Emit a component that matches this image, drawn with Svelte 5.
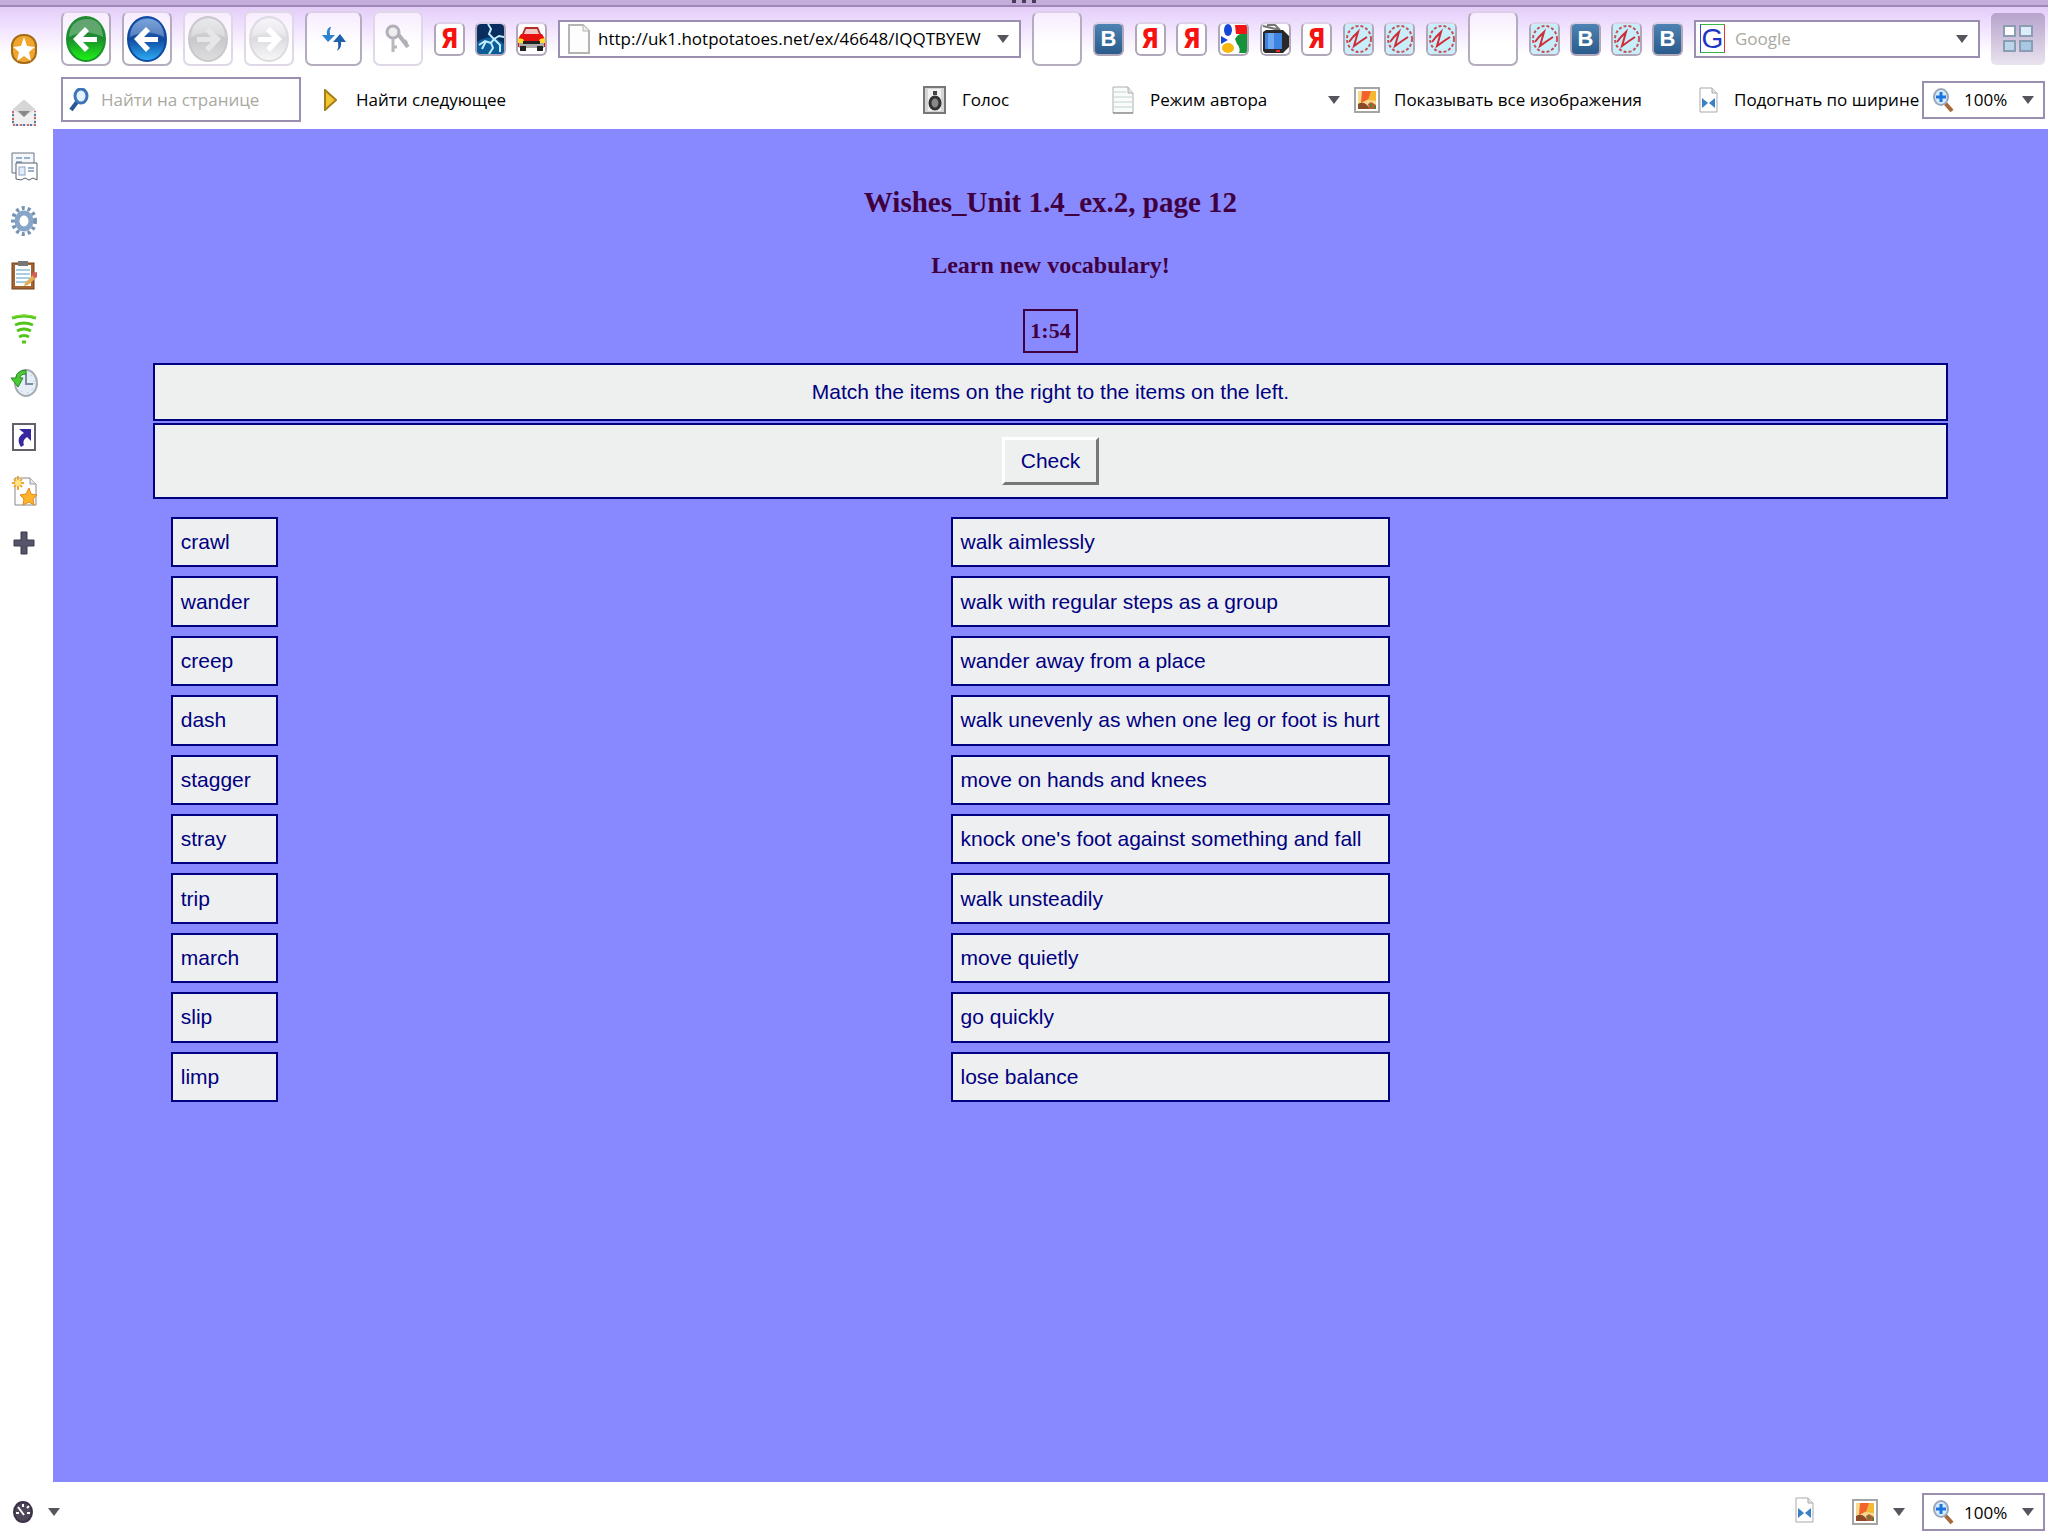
<script>
  const leftItems = ['crawl', 'wander', 'creep', 'dash', 'stagger', 'stray', 'trip', 'march', 'slip', 'limp'];

  const rightItems = [
    'walk aimlessly',
    'walk with regular steps as a group',
    'wander away from a place',
    'walk unevenly as when one leg or foot is hurt',
    'move on hands and knees',
    "knock one's foot against something and fall",
    'walk unsteadily',
    'move quietly',
    'go quickly',
    'lose balance'
  ];

  const panels = [
    'bookmarks', 'mail', 'windows', 'settings', 'notes',
    'unite', 'history', 'links', 'new', 'add'
  ];

  const bookmarksStart = ['ya', 'storm', 'car'];
  const bookmarksMid = ['vk', 'ya', 'ya', 'google', 'tv', 'ya', 'z', 'z', 'z'];
  const bookmarksEnd = ['z', 'vk', 'z', 'vk'];

  let url = $state('http://uk1.hotpotatoes.net/ex/46648/IQQTBYEW');
  let zoom = $state('100%');
</script>

{#snippet triangle()}
  <svg class="triangle" width="12" height="8" viewBox="0 0 12 8"><path d="M0 0h12L6 8z" fill="#56545c" /></svg>
{/snippet}

{#snippet arrow(id, top, mid, low, glyph, flip)}
  <svg width="42" height="48" viewBox="0 0 42 48">
    <defs>
      <linearGradient id={id} x1="0" y1="0" x2="0" y2="1">
        <stop offset="0" stop-color={top} />
        <stop offset="0.5" stop-color={mid} />
        <stop offset="1" stop-color={low} />
      </linearGradient>
    </defs>
    <ellipse cx="21" cy="24" rx="19" ry="22" fill="url(#{id})" stroke={mid} stroke-width="2" />
    <path d="M4 22Q5 5 21 4T38 22Q21 13 4 22z" fill="#fff" opacity="0.28" />
    <path
      d="M20 12l4 4-6 6h14v5H18l6 6-4 4L8 24z"
      fill={glyph}
      transform={flip ? 'translate(42 0) scale(-1 1)' : undefined}
    />
  </svg>
{/snippet}

{#snippet favicon(kind)}
  <button class="fav {kind}" aria-label={kind}>
    {#if kind === 'ya'}
      <span class="ya-letter">Я</span>
    {:else if kind === 'vk'}
      <span class="vk-letter">B</span>
    {:else if kind === 'storm'}
      <svg width="27" height="30" viewBox="0 0 27 30">
        <rect width="27" height="30" fill="#082d5e" />
        <path d="M0 18Q14 8 27 20V30H0z" fill="#0d5d98" />
        <path d="M11 0l3 5-2 5 5 5-3 4 2 5-4 6M17 15l5-3 5 1M14 19l-6-2-6 4M17 15l6 6v7M9 17l-4 8" fill="none" stroke="#bfefff" stroke-width="2" />
      </svg>
    {:else if kind === 'car'}
      <svg width="27" height="30" viewBox="0 0 27 30">
        <path d="M7 3h13l3 7H4z" fill="#b52b28" />
        <path d="M8 5h11l2 5H6z" fill="#efc9c5" />
        <path d="M3 10h21l3 5v8H0v-8z" fill="#e6100e" />
        <path d="M0 14l5 1 2 4H0zM27 14l-5 1-2 4h7z" fill="#ffd92c" />
        <path d="M1 19h25v5H1z" fill="#aaa" />
        <path d="M5 17h17v3H5zM2 22h6v5H2zM19 22h6v5h-6z" fill="#222" />
      </svg>
    {:else if kind === 'google'}
      <svg width="27" height="30" viewBox="0 0 27 30">
        <path d="M15 1h12v9H16z" fill="#ef1616" />
        <path d="M27 10v19h-8q2-5-2-9l-2-5q3-5 6-5z" fill="#15923a" />
        <ellipse cx="8" cy="6" rx="4" ry="6" fill="#1648d8" />
        <ellipse cx="8" cy="24" rx="6" ry="5" fill="#f5b70c" />
        <path d="M1 12l7 4-7 4z" fill="#1648d8" />
      </svg>
    {:else if kind === 'tv'}
      <svg width="27" height="30" viewBox="0 0 27 30">
        <path d="M1 2l17 4M5 1h8l5 5" fill="none" stroke="#777" stroke-width="2" />
        <path d="M1 8l3-2h17l6 6v11l-6 6H3l-2-2z" fill="#292929" />
        <rect x="3" y="9" width="17" height="16" fill="#3f83e0" />
        <rect x="6" y="9" width="6" height="16" fill="#6ea8f2" />
        <rect x="14" y="26" width="4" height="2" fill="#f22" />
      </svg>
    {:else}
      <svg width="27" height="30" viewBox="0 0 27 30">
        <rect width="27" height="30" fill="#c8eefb" />
        <ellipse cx="14" cy="15" rx="12" ry="13" fill="none" stroke="#c9525a" stroke-width="2" stroke-dasharray="3 2" />
        <path d="M4 18l4-5 5-5-4 14 7-5 6-4" fill="none" stroke="#cf2e38" stroke-width="2" />
      </svg>
    {/if}
  </button>
{/snippet}

{#snippet panelIcon(kind)}
  <svg width="28" height="32" viewBox="0 0 28 32">
    {#if kind === 'bookmarks'}
      <rect x="2" y="2" width="24" height="28" rx="11" fill="#f0a52c" stroke="#a66b18" stroke-width="2" />
      <path d="M14 4l3 9 8 1-6 5 2 9-7-5-7 5 2-9-6-5 8-1z" fill="#fff" />
    {:else if kind === 'mail'}
      <path d="M3 13L14 3l11 10v15H3z" fill="#f0f0f0" stroke="#c4c4c4" />
      <path d="M3 12l11-9 11 9-11 8z" fill="#d6d6d6" />
      <path d="M8 14h12l-6 6z" fill="#888" />
      <path d="M3 14v14h22V14" fill="none" stroke="#c66" stroke-width="2" stroke-dasharray="2 5" />
      <path d="M3 17v11h22V17" fill="none" stroke="#57a" stroke-width="2" stroke-dasharray="2 5" />
    {:else if kind === 'windows'}
      <path d="M2 2h22v20H2z" fill="#f4f7fb" stroke="#6d7480" stroke-width="1" />
      <path d="M6 7h6M6 11h6M14 7h6" stroke="#9db0cb" stroke-width="2" />
      <path d="M6 12h21v17l-4-2-4 2-4-2-4 2-5-1z" fill="#fff" stroke="#59606b" stroke-width="1" />
      <rect x="9" y="16" width="6" height="8" fill="#e2edf9" stroke="#8ba3c5" />
      <path d="M18 17h6M18 20h6" stroke="#9db0cb" stroke-width="2" />
    {:else if kind === 'settings'}
      <ellipse cx="14" cy="16" rx="11" ry="13" fill="none" stroke="#7693b4" stroke-width="4" stroke-dasharray="3 3" />
      <ellipse cx="14" cy="16" rx="7" ry="8" fill="#fff" stroke="#86a5c8" stroke-width="5" />
    {:else if kind === 'notes'}
      <rect x="2" y="4" width="22" height="26" fill="#a46431" stroke="#75401a" />
      <path d="M5 6h16v21H5z" fill="#fff" />
      <path d="M6 11h14M6 15h14M6 19h14M6 23h12" stroke="#a8cce0" stroke-width="2" />
      <path d="M8 2h10v5H8z" fill="#777" />
      <path d="M15 24l9-9 3 3-9 8-4 1z" fill="#e4ad51" />
      <path d="M22 14l5-1v5l-3 1z" fill="#d75b5b" />
    {:else if kind === 'unite'}
      <path d="M2 5q12-4 24 0M5 12q9-4 18 0M7 18q7-4 14 0M9 24q5-3 10 0M12 29h4" fill="none" stroke="#55c51b" stroke-width="3" />
      <path d="M2 4q12-4 24 0" fill="none" stroke="#8ae03a" stroke-width="1" />
    {:else if kind === 'history'}
      <ellipse cx="16" cy="16" rx="11" ry="13" fill="#e5eef6" stroke="#a7acb2" stroke-width="2" />
      <path d="M16 6v11h7" fill="none" stroke="#7b8da0" stroke-width="2" />
      <ellipse cx="16" cy="16" rx="8" ry="10" fill="none" stroke="#a5b0bc" stroke-dasharray="1 5" />
      <path d="M16 3Q6 4 6 11H1l7 9 5-9h-3q0-4 6-4z" fill="#4cca35" stroke="#258c22" />
    {:else if kind === 'links'}
      <rect x="3" y="3" width="22" height="26" fill="#fff" stroke="#62606b" stroke-width="2" />
      <path d="M9 8h12v12l-4-4q-5 3-3 8l-3 2q-6-9 3-14z" fill="#3427a0" />
    {:else if kind === 'new'}
      <path d="M5 3h15l6 6v21H5z" fill="#fff" stroke="#888" />
      <path d="M20 3v6h6" fill="#e8e8e8" stroke="#999" />
      <path d="M8 1v14M2 8h12M4 4l8 8M12 4l-8 8" stroke="#f3a82c" stroke-width="2" />
      <ellipse cx="8" cy="8" rx="3" ry="3" fill="#ffe583" />
      <path d="M19 13l2 6 6 1-4 4 1 6-5-3-6 3 1-6-4-4 6-1z" fill="#ffb32d" stroke="#e68613" />
    {:else}
      <path d="M11 3h6v8h7v6h-7v8h-6v-8H4v-6h7z" fill="#55546a" stroke="#3b3a4a" />
    {/if}
  </svg>
{/snippet}

{#snippet picture()}
  <svg width="26" height="26" viewBox="0 0 26 26">
    <rect x="1" y="1" width="24" height="24" fill="#fff" stroke="#a5a5a5" stroke-width="2" />
    <rect x="4" y="4" width="18" height="18" fill="#f5d98c" />
    <path d="M8 4h10l-3 8-8 4z" fill="#f2622c" />
    <path d="M17 4h5v10l-8-1z" fill="#f4b832" />
    <path d="M4 17q5-3 9 1l3 4H4z" fill="#8a4a28" />
    <path d="M14 17l3-2 5 3v4h-7z" fill="#b0603c" />
    <path d="M16 17h2v3h-2zM20 19h2v3h-2z" fill="#5b7c2f" />
  </svg>
{/snippet}

{#snippet fitPage()}
  <svg width="19" height="26" viewBox="0 0 19 26">
    <path d="M1 1h12l5 5v19H1z" fill="#fff" stroke="#a9a9a9" />
    <path d="M13 1v5h5" fill="#e5e5e5" stroke="#a9a9a9" />
    <path d="M3 11l6 5-6 5zM16 11l-6 5 6 5z" fill="#3c80c4" />
  </svg>
{/snippet}

{#snippet zoomBox(label)}
  <label class="zoom">
    <svg width="22" height="26" viewBox="0 0 22 26">
      <path d="M13 16l7 8" stroke="#a5693a" stroke-width="4" />
      <ellipse cx="9" cy="10" rx="7" ry="8" fill="#d5ecff" stroke="#9aa7b8" stroke-width="2" />
      <path d="M9 5v10M4 10h10" stroke="#1c74dc" stroke-width="3" />
    </svg>
    <select bind:value={zoom} aria-label={label}>
      <option>100%</option>
      <option>150%</option>
    </select>
    {@render triangle()}
  </label>
{/snippet}

<div class="browser">
  <div class="grip"><i></i><i></i><i></i></div>

  <aside class="panels">
    {#each panels as panel}
      <button class="panel" aria-label={panel}>{@render panelIcon(panel)}</button>
    {/each}
  </aside>

  <header class="bars">
    <div class="toolbar">
      <button class="big" aria-label="Rewind">{@render arrow('green', '#2a7d3e', '#1c8f2e', '#1cf512', '#fff', false)}</button>
      <button class="big" aria-label="Back">{@render arrow('blue', '#4b86d2', '#11489f', '#2cb0f8', '#fff', false)}</button>
      <button class="big faded" aria-label="Forward">{@render arrow('grey', '#e4e2e8', '#c9c8cc', '#dedede', '#e6e6e8', true)}</button>
      <button class="big faded" aria-label="Fast forward">{@render arrow('pale', '#f6f2fa', '#dddbe0', '#f8f8f8', '#fff', true)}</button>
      <button class="big wide" aria-label="Reload">
        <svg width="24" height="26" viewBox="0 0 24 26">
          <path d="M8 1Q4 3 5 9H0l6 7 7-7H8Q7 5 9 1z" fill="#2d83cf" />
          <path d="M15 25q5-3 4-9h5l-6-8-7 8h5q1 5-1 9z" fill="#1f62ab" />
        </svg>
      </button>
      <button class="big faded" aria-label="Wand">
        <svg width="26" height="30" viewBox="0 0 26 30">
          <ellipse cx="8" cy="8" rx="6" ry="6" fill="#eee" stroke="#b3afb8" stroke-width="3" />
          <path d="M8 14v14M8 23h4" stroke="#b9b6bd" stroke-width="3" />
          <path d="M13 10l10 13M19 19l3-2" stroke="#b3afb8" stroke-width="4" />
        </svg>
      </button>
      <div class="favs">
        {#each bookmarksStart as kind}{@render favicon(kind)}{/each}
      </div>
      <label class="field address">
        <svg width="22" height="30" viewBox="0 0 22 30">
          <path d="M1 1h14l6 6v22H1z" fill="#fdfdfd" stroke="#b4b4b0" stroke-width="2" />
          <path d="M15 1v6h6" fill="#eee" stroke="#b4b4b0" />
        </svg>
        <input type="text" bind:value={url} aria-label="Address" />
        {@render triangle()}
      </label>
      <button class="big" aria-label="Empty slot"></button>
      <div class="favs mid">
        {#each bookmarksMid as kind}{@render favicon(kind)}{/each}
      </div>
      <button class="big" aria-label="Empty slot"></button>
      <div class="favs">
        {#each bookmarksEnd as kind}{@render favicon(kind)}{/each}
      </div>
      <label class="field search">
        <span class="g-logo">G</span>
        <input type="text" placeholder="Google" aria-label="Google" />
        {@render triangle()}
      </label>
      <button class="speed-dial" aria-label="Speed dial">
        <svg width="30" height="28" viewBox="0 0 30 28">
          <g fill="#dcecf8" stroke="#8b9db5" stroke-width="2">
            <rect x="1" y="1" width="11" height="10" fill="#fff" />
            <rect x="17" y="1" width="12" height="10" />
            <rect x="1" y="16" width="11" height="10" fill="#b9d6ea" />
            <rect x="17" y="16" width="12" height="10" fill="#a6c8e2" />
          </g>
        </svg>
      </button>
    </div>

    <div class="toolbar view-bar">
      <label class="field find">
        <svg width="20" height="24" viewBox="0 0 20 24">
          <path d="M8 14l-6 8" stroke="#2b5795" stroke-width="4" />
          <ellipse cx="12" cy="8" rx="6" ry="7" fill="#e3f2ff" stroke="#3f74b8" stroke-width="3" />
        </svg>
        <input type="text" placeholder="Найти на странице" aria-label="Найти на странице" />
      </label>
      <button class="command next">
        <svg width="13" height="22" viewBox="0 0 13 22"><path d="M1 1l11 10L1 21z" fill="#f2c631" stroke="#a7801b" stroke-width="2" /></svg>
        Найти следующее
      </button>
      <button class="command voice">
        <svg width="23" height="28" viewBox="0 0 23 28">
          <rect x="1" y="1" width="21" height="26" fill="#d5d5d5" stroke="#777" stroke-width="2" />
          <rect x="5" y="3" width="13" height="22" fill="#f1f1f1" />
          <rect x="10" y="5" width="4" height="4" fill="#444" />
          <ellipse cx="12" cy="17" rx="5" ry="6" fill="#888" stroke="#333" stroke-width="3" />
        </svg>
        Голос
      </button>
      <button class="command author">
        <svg width="22" height="28" viewBox="0 0 22 28">
          <path d="M1 1h15l5 6v20H1z" fill="#fafcfb" stroke="#aab0ae" />
          <path d="M2 6h12M2 11h18M2 16h18M2 21h18" stroke="#bfd4d0" />
          <path d="M16 1v6h5" fill="#e5e5e5" stroke="#aaa" />
          <path d="M1 27h20" stroke="#777" />
        </svg>
        Режим автора
      </button>
      <button class="command images">
        {@render triangle()}
        {@render picture()}
        Показывать все изображения
      </button>
      <button class="command fit">
        {@render fitPage()}
        Подогнать по ширине
      </button>
      {@render zoomBox('Масштаб')}
    </div>
  </header>

  <main>
    <h1>Wishes_Unit 1.4_ex.2, page 12</h1>
    <h2>Learn new vocabulary!</h2>
    <div class="timer">1:54</div>
    <p class="box">Match the items on the right to the items on the left.</p>
    <div class="box nav"><button class="check">Check</button></div>

    <div class="match">
      <ul>
        {#each leftItems as item}<li>{item}</li>{/each}
      </ul>
      <ul>
        {#each rightItems as item}<li>{item}</li>{/each}
      </ul>
    </div>
  </main>

  <footer class="status">
    <button class="turbo" aria-label="Turbo">
      <svg width="20" height="22" viewBox="0 0 20 22">
        <ellipse cx="10" cy="11" rx="9" ry="10" fill="#4f4659" stroke="#3b3145" stroke-width="2" />
        <path d="M5 6l6 8M10 3v3M3 12h3M14 12h3M14 7l2-2" stroke="#fff" stroke-width="2" />
      </svg>
      {@render triangle()}
    </button>
    <button class="plain" aria-label="Подогнать по ширине">{@render fitPage()}</button>
    <button class="plain pictures" aria-label="Изображения">
      {@render picture()}
      {@render triangle()}
    </button>
    {@render zoomBox('Масштаб страницы')}
  </footer>
</div>

<style>
  :global(body) {
    margin: 0;
  }

  .browser {
    display: grid;
    grid-template-columns: 53px 1fr;
    grid-template-rows: 7px auto 1fr 54px;
    min-height: 100vh;
    background: linear-gradient(#dcc6f0 0, #ead6fd 16px, #fff 54px);
    font-family: 'Open Sans', 'Noto Sans', sans-serif;
    font-size: 17px;
    color: #000;
  }

  button {
    padding: 0;
    border: none;
    background: none;
    font: inherit;
    color: inherit;
  }

  svg {
    flex: none;
  }

  .grip {
    grid-column: 1 / -1;
    display: flex;
    justify-content: center;
    gap: 6px;
    background: #c4addb;
    border-bottom: 2px solid #a287b6;
    box-sizing: border-box;
  }

  .grip i {
    width: 4px;
    height: 3px;
    background: #4a3a58;
  }

  /* side panel buttons */
  .panels {
    grid-row: 2 / 4;
    display: flex;
    flex-direction: column;
    padding: 15px 5px 0 0;
  }

  .panel {
    height: 54px;
    display: flex;
    align-items: center;
    justify-content: center;
  }

  .panel:first-child {
    margin-bottom: 10px;
  }

  .bars {
    min-width: 0;
  }

  .toolbar {
    display: flex;
    align-items: center;
    gap: 11px;
    height: 63px;
    padding: 0 3px 0 8px;
  }

  .view-bar {
    gap: 0;
    height: 59px;
  }

  .big {
    flex: none;
    display: flex;
    align-items: center;
    justify-content: center;
    width: 50px;
    height: 55px;
    border: 2px solid #b5adbd;
    border-top-color: #dccfe8;
    border-radius: 7px;
    background: linear-gradient(#f8ecff, #fff 60%);
  }

  .big.wide {
    width: 57px;
  }

  .big.faded {
    border-color: #e0d8e6;
  }

  .favs {
    flex: none;
    display: flex;
    justify-content: space-between;
    gap: 10px;
  }

  .favs.mid {
    width: 364px;
  }

  .fav {
    display: flex;
    align-items: center;
    justify-content: center;
    overflow: hidden;
    width: 31px;
    height: 34px;
    border: 2px solid #b0a8b8;
    border-top-color: #dccfe8;
    border-radius: 6px;
    background: #fff;
  }

  .fav.vk {
    background: linear-gradient(#4d83b3, #2a5b8c);
  }

  .ya-letter {
    font: bold 26px/28px 'DejaVu Sans Condensed', 'Liberation Sans', sans-serif;
    color: #f5120f;
  }

  .vk-letter {
    font: bold 22px/26px 'Liberation Sans', sans-serif;
    color: #fff;
  }

  .field,
  .zoom {
    display: flex;
    align-items: center;
    box-sizing: border-box;
    border: 2px solid #9a8fb0;
    background: #fff;
  }

  .field {
    height: 38px;
    padding: 0 10px 0 8px;
  }

  input {
    flex: 1;
    min-width: 0;
    padding: 0;
    border: none;
    outline: none;
    background: none;
    font: inherit;
    color: #000;
  }

  input::placeholder {
    color: #aaa99f;
    opacity: 1;
  }

  .address {
    flex: 1;
    gap: 8px;
    min-width: 0;
  }

  .search {
    flex: none;
    width: 286px;
    gap: 10px;
    padding-left: 4px;
  }

  .g-logo {
    width: 23px;
    height: 27px;
    border: 1px solid #3ab54a;
    border-left-color: #2647d8;
    border-right-color: #e03a2f;
    font: 28px/27px 'Liberation Sans', sans-serif;
    text-align: center;
    color: #1d35c4;
  }

  .speed-dial {
    flex: none;
    display: flex;
    align-items: center;
    justify-content: center;
    width: 54px;
    height: 52px;
    border-radius: 5px;
    background: linear-gradient(#b7a3cc, #e9e3ee);
  }

  .find {
    width: 240px;
    height: 45px;
    gap: 12px;
    padding-left: 6px;
  }

  .command {
    display: flex;
    align-items: center;
    gap: 16px;
    white-space: nowrap;
  }

  .next {
    margin: 0 auto 0 23px;
    gap: 19px;
  }

  .voice {
    width: 189px;
  }

  .author {
    width: 216px;
  }

  .images {
    width: 371px;
    gap: 14px;
  }

  .fit {
    width: 223px;
  }

  .zoom {
    width: 123px;
    height: 38px;
    padding: 0 9px 0 8px;
  }

  .zoom select {
    flex: 1;
    min-width: 0;
    padding: 0 0 0 10px;
    border: none;
    background: none;
    appearance: none;
    font: inherit;
    color: #000;
  }

  /* exercise page */
  main {
    padding: 0 5% 40px;
    background: #8888ff;
    font-family: 'Liberation Sans', Arial, sans-serif;
    font-size: 21px;
    color: #000080;
  }

  h1,
  h2,
  .timer {
    font-family: 'Liberation Serif', serif;
    font-weight: bold;
    text-align: center;
    color: #400040;
  }

  h1 {
    margin: 55px 0 0;
    font-size: 29px;
    line-height: 36px;
  }

  h2 {
    margin: 29px 0 0;
    font-size: 24px;
    line-height: 32px;
  }

  .timer {
    width: fit-content;
    margin: 28px auto 10px;
    padding: 0 5px;
    border: 2px solid #400040;
    font-size: 22px;
    line-height: 40px;
  }

  .box {
    margin: 0;
    border: 2px solid #000080;
    background: #eef0f0;
    line-height: 54px;
    text-align: center;
  }

  .nav {
    display: flex;
    justify-content: center;
    margin-top: 2px;
    padding: 12px 0;
  }

  .check {
    padding: 0 16px;
    border: 3px solid;
    border-color: #fff #777 #777 #fff;
    background: #eef0f0;
    line-height: 42px;
  }

  .match {
    display: grid;
    grid-template-columns: 39fr 49fr;
    padding: 18px;
  }

  ul {
    display: flex;
    flex-direction: column;
    gap: 9px;
    width: fit-content;
    min-height: 585px;
    margin: 0;
    padding: 0;
    list-style: none;
  }

  li {
    flex: 1;
    display: flex;
    align-items: center;
    min-width: 87px;
    padding: 0 8px;
    border: 2px solid #000080;
    background: #eeeff0;
    white-space: nowrap;
  }

  .status {
    grid-column: 1 / -1;
    display: flex;
    align-items: center;
    padding: 6px 3px 0 13px;
  }

  .turbo,
  .pictures {
    display: flex;
    align-items: center;
    gap: 15px;
  }

  .turbo {
    margin-right: auto;
  }

  .plain {
    margin-right: 38px;
  }

  .plain.pictures {
    margin-right: 17px;
  }
</style>
